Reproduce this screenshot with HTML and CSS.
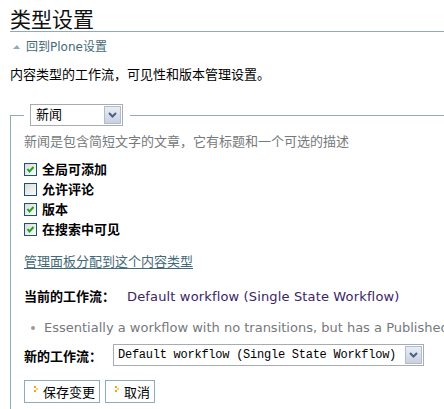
FILE: index.html
```html
<!DOCTYPE html>
<html lang="zh-CN">
<head>
<meta charset="utf-8">
<title>类型设置</title>
<link rel="stylesheet" href="styles.css">
</head>
<body>
<div class="page">
  <h1 class="title">类型设置</h1>
  <div class="back"><span class="tri"></span><a class="back-link" href="#">回到Plone设置</a></div>
  <p class="intro">内容类型的工作流，可见性和版本管理设置。</p>
  <fieldset class="box">
    <legend class="legend">
      <div class="select sel-type">
        <span class="sel-text">新闻</span>
        <span class="sel-btn"><svg width="9" height="6" viewBox="0 0 9 6"><polyline points="1,1 4.5,4.5 8,1" fill="none" stroke="#4d6185" stroke-width="2"/></svg></span>
      </div>
    </legend>
    <p class="desc">新闻是包含简短文字的文章，它有标题和一个可选的描述</p>
    <ul class="checks">
      <li class="check-row"><span class="cb"><svg width="11" height="11" viewBox="0 0 11 11"><polyline points="2.5,5 4.5,7.5 8.5,3" fill="none" stroke="#21a121" stroke-width="2"/></svg></span><span class="check-label">全局可添加</span></li>
      <li class="check-row"><span class="cb"></span><span class="check-label">允许评论</span></li>
      <li class="check-row"><span class="cb"><svg width="11" height="11" viewBox="0 0 11 11"><polyline points="2.5,5 4.5,7.5 8.5,3" fill="none" stroke="#21a121" stroke-width="2"/></svg></span><span class="check-label">版本</span></li>
      <li class="check-row"><span class="cb"><svg width="11" height="11" viewBox="0 0 11 11"><polyline points="2.5,5 4.5,7.5 8.5,3" fill="none" stroke="#21a121" stroke-width="2"/></svg></span><span class="check-label">在搜索中可见</span></li>
    </ul>
    <div class="panel-row"><a class="panel-link" href="#">管理面板分配到这个内容类型</a></div>
    <div class="wf-current"><span class="wf-label">当前的工作流：</span><span class="wf-name">Default workflow (Single State Workflow)</span></div>
    <div class="wf-desc"><span class="bullet"></span><span class="wf-desc-text">Essentially a workflow with no transitions, but has a Published state, so portlets and applications that expect that state will continue to work.</span></div>
    <div class="wf-new">
      <span class="wf-label">新的工作流：</span>
      <div class="select sel-wf">
        <span class="sel-text mono">Default workflow (Single State Workflow)</span>
        <span class="sel-btn"><svg width="9" height="6" viewBox="0 0 9 6"><polyline points="1,1 4.5,4.5 8,1" fill="none" stroke="#4d6185" stroke-width="2"/></svg></span>
      </div>
    </div>
    <div class="buttons">
      <button class="btn" type="button"><svg class="btn-icon" width="5" height="8" viewBox="0 0 5 8"><rect x="0" y="0" width="2" height="2" fill="#ffa200"/><rect x="2" y="2" width="2" height="2" fill="#ffc966"/><rect x="0" y="4" width="2" height="2" fill="#ffa200"/></svg>保存变更</button>
      <button class="btn" type="button"><svg class="btn-icon" width="5" height="8" viewBox="0 0 5 8"><rect x="0" y="0" width="2" height="2" fill="#ffa200"/><rect x="2" y="2" width="2" height="2" fill="#ffc966"/><rect x="0" y="4" width="2" height="2" fill="#ffa200"/></svg>取消</button>
    </div>
  </fieldset>
</div>
</body>
</html>
```

FILE: styles.css
```css
html, body {
  margin: 0;
  padding: 0;
  overflow: hidden;
  background: #fff;
}
body {
  font-family: "DejaVu Sans", "Noto Sans CJK SC", sans-serif;
  font-size: 13px;
  color: #000;
}
.page {
  padding-left: 10px;
  width: 480px;
}
.title {
  margin: 0;
  padding-top: 5px;
  font-family: "Noto Sans CJK SC", sans-serif;
  font-size: 21px;
  line-height: 26px;
  font-weight: normal;
  color: #111;
  border-bottom: 1px solid #8cacbb;
}
.back {
  display: flex;
  align-items: center;
  margin-top: 7px;
  height: 16px;
  padding-left: 3px;
}
.tri {
  flex: none;
  width: 0;
  height: 0;
  border-left: 4px solid transparent;
  border-right: 3px solid transparent;
  border-bottom: 4px solid #8cacbb;
  margin-right: 6px;
  margin-top: -1px;
}
.back-link {
  font-size: 12px;
  line-height: 16px;
  color: #436976;
  text-decoration: none;
}
.intro {
  margin: 12px 0 0;
  line-height: 16px;
}
.box {
  margin: 21px 0 0;
  padding: 0 0 40px 13px;
  border: 1px solid #8cacbb;
  border-right: none;
  border-bottom: none;
  min-width: 0;
}
.legend {
  padding: 0 7px 0 6px;
}
.select {
  flex: none;
  display: flex;
  align-items: center;
  box-sizing: border-box;
  height: 22px;
  border: 1px solid #a5acb2;
  background: #fff;
}
.sel-type {
  width: 93px;
}
.sel-wf {
  width: 311px;
}
.sel-text {
  flex: 1;
  padding-left: 5px;
  line-height: 18px;
  white-space: nowrap;
  overflow: hidden;
}
.mono {
  font-family: "Liberation Mono", monospace;
  font-size: 12px;
  padding-left: 4px;
  letter-spacing: -0.25px;
}
.sel-btn {
  flex: none;
  display: flex;
  align-items: center;
  justify-content: center;
  box-sizing: border-box;
  width: 17px;
  height: 18px;
  margin-right: 1px;
  border: 1px solid #b3bccd;
  background: linear-gradient(#e9edf5, #c9d0df);
}
.desc {
  margin: 8px 0 0;
  line-height: 16px;
  color: #76797c;
}
.checks {
  list-style: none;
  margin: 9px 0 0;
  padding: 0;
}
.check-row {
  display: flex;
  align-items: center;
  height: 20px;
}
.cb {
  flex: none;
  display: flex;
  align-items: center;
  justify-content: center;
  box-sizing: border-box;
  width: 13px;
  height: 13px;
  border: 1px solid #1c5180;
  background: linear-gradient(135deg, #dcdcd7, #fbfbf9);
  margin-right: 5px;
  margin-top: 1px;
}
.check-label {
  font-family: "Noto Sans CJK SC", sans-serif;
  font-weight: bold;
  line-height: 16px;
}
.panel-row {
  margin-top: 15px;
  line-height: 16px;
}
.panel-link {
  color: #436976;
  text-decoration: underline;
  text-underline-offset: 2px;
}
.wf-current {
  margin-top: 18px;
  line-height: 16px;
  white-space: nowrap;
}
.wf-label {
  font-family: "Noto Sans CJK SC", sans-serif;
  font-weight: bold;
}
.wf-name {
  margin-left: 12px;
  color: #3a2566;
  letter-spacing: 0.15px;
}
.wf-desc {
  margin-top: 15px;
  line-height: 16px;
  color: #76797c;
  white-space: nowrap;
  display: flex;
  align-items: center;
}
.bullet {
  flex: none;
  width: 4px;
  height: 4px;
  border-radius: 50%;
  background: #999b9e;
  margin-left: 7px;
  margin-right: 9px;
}
.wf-desc-text {
  flex: none;
}
.wf-new {
  display: flex;
  align-items: center;
  margin-top: 8px;
  height: 22px;
}
.wf-new .wf-label {
  flex: none;
  width: 89px;
}
.buttons {
  display: flex;
  gap: 5px;
  margin-top: 14px;
}
.btn {
  display: flex;
  align-items: center;
  box-sizing: border-box;
  height: 23px;
  padding: 0 4px 0 9px;
  border: 1px solid #8cacbb;
  background: #fff;
  font-family: "Noto Sans CJK SC", sans-serif;
  font-size: 13px;
  color: #000;
  cursor: pointer;
}
.btn-icon {
  flex: none;
  margin-right: 4px;
  margin-top: -4px;
}
```
